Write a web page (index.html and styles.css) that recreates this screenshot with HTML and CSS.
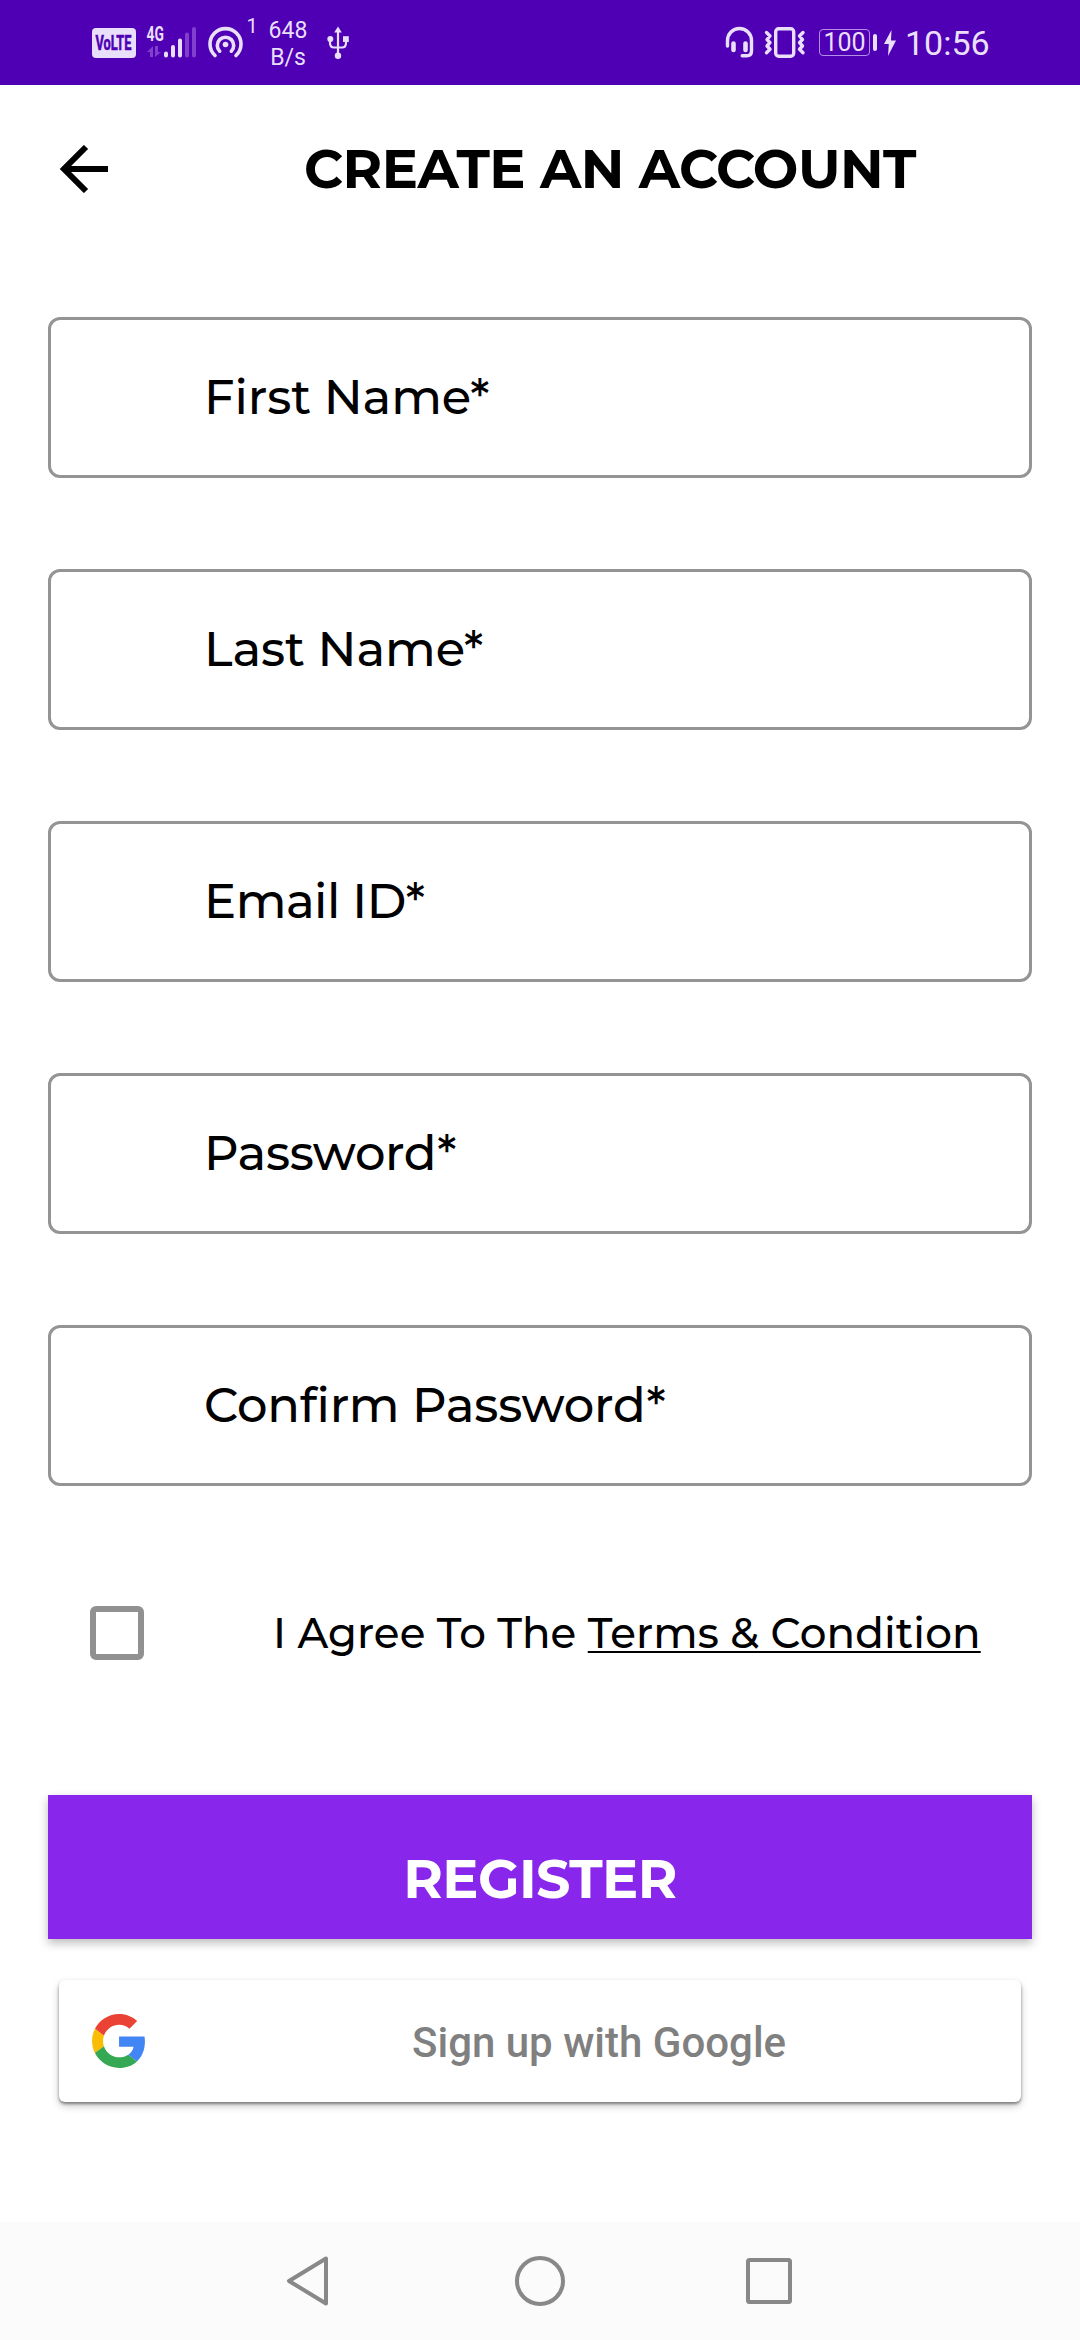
FILE: index.html
```html
<!DOCTYPE html>
<html lang="en">
<head>
<meta charset="utf-8">
<title>Create an account</title>
<link rel="stylesheet" href="styles.css">
</head>
<body>
<div class="screen">
  <header class="status">
    <div class="status-left">
      <svg class="volte" width="44" height="30" viewBox="0 0 44 30">
        <rect width="44" height="30" rx="4" fill="#eadffa"/>
        <text transform="translate(3.500 21.500) scale(.64 1)" class="volte-text">VoLTE</text>
      </svg>
      <svg class="signal" width="52" height="38" viewBox="145 20 52 38">
        <text transform="translate(146.500 41) scale(.71 1)" class="net-text">4G</text>
        <g fill="none" stroke="#eadffa" stroke-width="4" stroke-linecap="round">
          <path d="M166 53.500v2M173 47v8.500M180 40.500v15"/>
          <path d="M187 34.500v21M194 29v26.500" stroke="#813fce"/>
        </g>
        <g fill="#813fce"><path d="M147 52l6-6v11h-3v-5zM155 46h3v6h3l-6 5z"/></g>
      </svg>
      <svg class="hotspot" width="36" height="34" viewBox="208 26 36 34" fill="none" stroke="#eadffa" stroke-width="3.600" stroke-linecap="round">
        <path d="M215 55.500A15.500 15.500 0 1 1 236 55.500M219.700 51.200A8.200 8.200 0 1 1 231.300 51.200"/>
        <circle cx="225.500" cy="44.500" r="2.800" fill="#eadffa" stroke="none"/>
      </svg>
      <span class="count">1</span>
      <span class="speed">648<br>B/s</span>
      <svg class="usb" width="24" height="34" viewBox="326 26 24 34" fill="none" stroke="#eadffa" stroke-width="2.200">
        <path d="M338 31v25M330 40v3q0 4.500 4 4.500h8q4 0 4-4.500v-3"/>
        <g fill="#eadffa" stroke="none"><path d="M338 26.500l3.800 6h-7.600z"/><circle cx="338" cy="55.800" r="3.200"/><circle cx="330.300" cy="39" r="3"/><rect x="343" y="36.200" width="5.800" height="5.800"/></g>
      </svg>
    </div>
    <div class="status-right">
      <svg class="headset" width="30" height="32" viewBox="725 26 30 32" fill="none" stroke="#eadffa" stroke-width="3.400" stroke-linecap="round">
        <path d="M727.500 46v-5.500a12 12 0 0 1 24 0v10.500q0 4.800-4.800 4.800h-4.500"/>
        <path d="M733.500 43.500v6.500M745.500 43.500v6.500" stroke-width="4.600"/>
      </svg>
      <svg class="vibrate" width="42" height="34" viewBox="764 26 42 34" fill="none" stroke="#eadffa" stroke-width="3.400" stroke-linecap="round" stroke-linejoin="round">
        <rect x="775.700" y="28.700" width="18" height="27.600" rx="3"/>
        <path d="M766.500 32.500l3.500 3.500-3 3.500 3 3.200-3 3.300 3 3.200-3.500 3.500M803 32.500l-3.500 3.500 3 3.500-3 3.200 3 3.300-3 3.200 3.500 3.500"/>
      </svg>
      <span class="battery">100</span>
      <span class="nub"></span>
      <svg class="bolt" width="12" height="26" viewBox="0 0 12 26"><path d="M7.500 0L0 14h4.800L4 26l8-15.500H7z" fill="#eadffa"/></svg>
      <span class="clock">10:56</span>
    </div>
  </header>

  <div class="appbar">
    <svg class="back" width="48" height="48" viewBox="0 0 48 48" fill="none" stroke="#000" stroke-width="6"><path d="M48 24H5M26 2L4 24l22 22"/></svg>
    <h1 class="title">CREATE AN ACCOUNT</h1>
  </div>

  <main class="form">
    <div class="field">First Name*</div>
    <div class="field">Last Name*</div>
    <div class="field field-email">Email ID*</div>
    <div class="field field-password">Password*</div>
    <div class="field field-confirm">Confirm Password*</div>
  </main>

  <div class="agree">
    <span class="checkbox"></span>
    <span class="agree-text">I Agree To The <span class="terms">Terms &amp; Condition</span></span>
  </div>

  <div class="register">REGISTER</div>

  <div class="google">
    <svg class="g-logo" width="53" height="54" viewBox="0 0 47 48">
      <path fill="#EA4335" d="M24 9.500c3.540 0 6.710 1.220 9.210 3.600l6.850-6.850C35.900 2.380 30.470 0 24 0 14.620 0 6.510 5.380 2.560 13.220l7.980 6.190C12.430 13.720 17.740 9.500 24 9.500z"/>
      <path fill="#4285F4" d="M46.980 24.550c0-1.570-.15-3.090-.38-4.550H24v9.020h12.940c-.58 2.960-2.260 5.480-4.780 7.180l7.730 6c4.510-4.180 7.090-10.360 7.090-17.650z"/>
      <path fill="#FBBC05" d="M10.530 28.590c-.48-1.450-.76-2.990-.76-4.590s.27-3.140.76-4.590l-7.980-6.190C.92 16.460 0 20.120 0 24c0 3.880.92 7.540 2.560 10.780l7.970-6.190z"/>
      <path fill="#34A853" d="M24 48c6.480 0 11.930-2.130 15.890-5.810l-7.730-6c-2.150 1.450-4.920 2.300-8.160 2.300-6.260 0-11.570-4.220-13.470-9.910l-7.980 6.190C6.510 42.620 14.620 48 24 48z"/>
    </svg>
    <span class="g-text">Sign up with Google</span>
  </div>

  <nav class="nav">
    <svg width="46" height="54" viewBox="0 0 46 54"><path d="M41 4.500L4 27l37 22.500z"/></svg>
    <svg width="54" height="54" viewBox="0 0 54 54"><circle cx="27" cy="27" r="23"/></svg>
    <svg width="50" height="54" viewBox="0 0 50 54"><rect x="4" y="6" width="42" height="42" rx="1.500"/></svg>
  </nav>
</div>
</body>
</html>
```
FILE: styles.css
```css
* { box-sizing: border-box; }
body { margin: 0; background: #fff; }
.screen {
  width: 1080px;
  height: 2340px;
  display: flex;
  flex-direction: column;
  font-family: Montserrat, Inter, sans-serif;
  font-weight: 500;
  color: #000;
  background: #fff;
}
svg { display: block; flex: none; }

/* Status bar */
.status {
  height: 85px;
  flex: none;
  display: flex;
  justify-content: space-between;
  background: #4f00b5;
  color: #eadffa;
  font-family: Roboto, sans-serif;
  font-weight: 400;
}
.status-left, .status-right { display: flex; align-items: flex-start; }
.status-left { padding-left: 92px; }
.status-right { padding-right: 91px; }
.volte { margin-top: 28px; }
.volte-text { font: 700 20px Roboto, sans-serif; fill: #4f00b5; stroke: #4f00b5; stroke-width: .6px; }
.signal { margin: 20px 0 0 9px; }
.net-text { font: 700 19.500px Roboto, sans-serif; fill: #eadffa; }
.hotspot { margin: 26px 0 0 11px; }
.count { width: 16px; margin: 16px 0 0 0; font-size: 20px; line-height: 20px; text-align: center; }
.speed { width: 48px; margin: 17px 0 0 4px; font-size: 23px; line-height: 27px; text-align: center; }
.usb { margin: 26px 0 0 14px; }
.headset { margin-top: 26px; }
.vibrate { margin: 26px 0 0 9px; }
.battery {
  width: 51px;
  height: 27px;
  margin: 29px 0 0 13px;
  border: 1.500px solid #b48de4;
  border-radius: 4px;
  font-size: 25px;
  line-height: 25px;
  text-align: center;
}
.nub { width: 4px; height: 17px; margin: 34px 0 0 3px; border-radius: 2px; background: #eadffa; }
.bolt { margin: 30px 0 0 7px; }
.clock { width: 84px; margin: 23px 0 0 9px; font-size: 34px; line-height: 41px; white-space: nowrap; }

/* App bar */
.appbar { height: 168px; flex: none; display: flex; align-items: center; padding-left: 60px; }
.title {
  margin: 0 0 0 196px;
  font-size: 54px;
  line-height: 66px;
  font-weight: 700;
  letter-spacing: -.5px;
  white-space: nowrap;
}

/* Form */
.form { display: flex; flex-direction: column; gap: 91px; padding: 64px 48px 0; }
.field {
  height: 161px;
  display: flex;
  align-items: center;
  padding: 0 0 2px 153px;
  border: 3px solid #949494;
  border-radius: 12px;
  font-size: 48px;
  letter-spacing: -.1px;
  font-variant-ligatures: none;
}
.field-email { letter-spacing: -.5px; }
.field-password { letter-spacing: -.35px; }
.field-confirm { letter-spacing: -.2px; }
.agree { height: 54px; flex: none; display: flex; align-items: center; margin-top: 120px; padding-left: 90px; }
.checkbox { width: 54px; height: 54px; flex: none; border: 6px solid #919191; border-radius: 6px; }
.agree-text { margin-left: 129px; padding-bottom: 1px; font-size: 42px; line-height: 52px; letter-spacing: .06px; white-space: nowrap; }
.terms {
  letter-spacing: .13px;
  text-decoration: underline;
  text-decoration-thickness: 2px;
  text-underline-offset: 3px;
  text-decoration-skip-ink: none;
}
.register {
  height: 144px;
  flex: none;
  display: flex;
  align-items: center;
  justify-content: center;
  margin: 135px 48px 0;
  padding-top: 24px;
  background: #8826eb;
  box-shadow: 0 4px 9px rgba(0, 0, 0, .27);
  color: #fff;
  font-size: 54px;
  font-weight: 700;
  letter-spacing: -.6px;
}
.google {
  height: 122px;
  flex: none;
  display: flex;
  align-items: center;
  margin: 41px 59px 0;
  padding-left: 33px;
  border-radius: 6px;
  background: #fff;
  box-shadow: 0 2px 3px rgba(0, 0, 0, .42), 0 4px 9px rgba(0, 0, 0, .2);
}
.g-text { margin-left: 267px; padding-top: 2px; font: 500 42px Roboto, sans-serif; color: #808080; white-space: nowrap; }

/* System navigation */
.nav {
  height: 118px;
  flex: none;
  display: flex;
  align-items: center;
  justify-content: space-between;
  margin-top: auto;
  padding: 0 286px 0 285px;
  background: #fbfbfb;
}
.nav svg { fill: none; stroke: #888; stroke-width: 4px; stroke-linejoin: round; }
.nav svg:nth-child(2) { margin-left: 4px; }
```
